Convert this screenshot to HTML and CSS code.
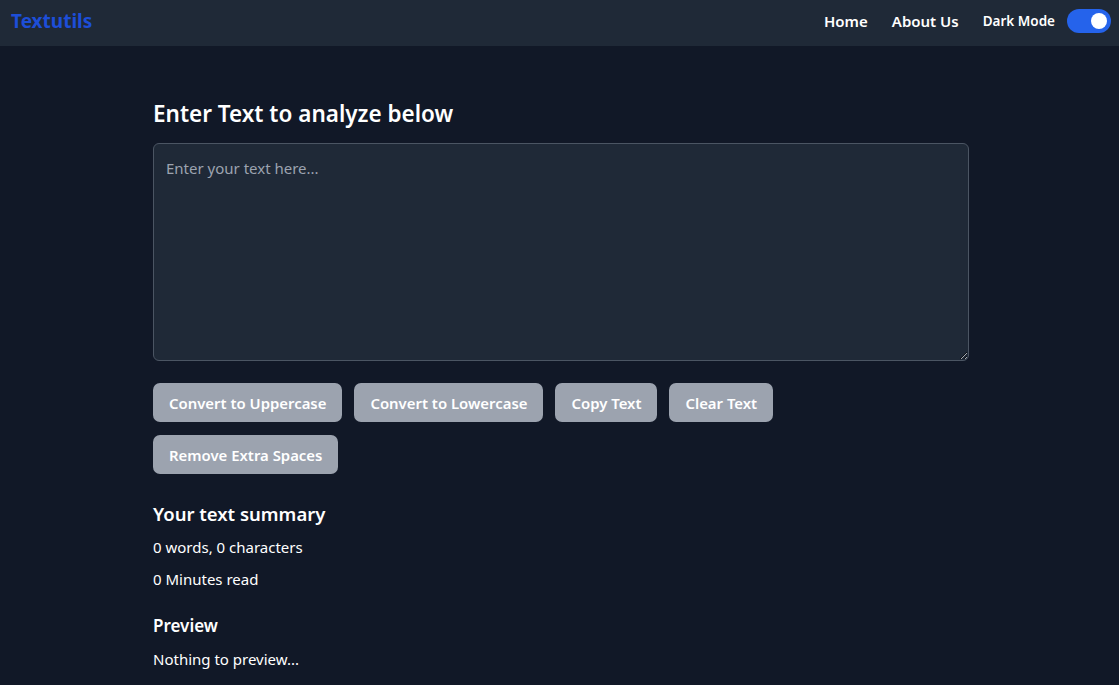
FILE: index.html
```html
<!DOCTYPE html>
<html lang="en">
<head>
<meta charset="utf-8">
<title>Textutils</title>
<link rel="stylesheet" href="styles.css">
</head>
<body>
<nav class="navbar">
  <a class="brand" href="#">Textutils</a>
  <div class="nav-right">
    <a class="nav-link" href="#">Home</a>
    <a class="nav-link" href="#">About Us</a>
    <span class="mode-label">Dark Mode</span>
    <span class="toggle"><span class="knob"></span></span>
  </div>
</nav>
<main class="container">
  <h1 class="title">Enter Text to analyze below</h1>
  <textarea class="text-input" placeholder="Enter your text here..."></textarea>
  <div class="buttons">
    <button class="btn">Convert to Uppercase</button>
    <button class="btn">Convert to Lowercase</button>
    <button class="btn">Copy Text</button>
    <button class="btn">Clear Text</button>
    <button class="btn">Remove Extra Spaces</button>
  </div>
  <h2 class="summary-title">Your text summary</h2>
  <p class="line">0 words, 0 characters</p>
  <p class="line">0 Minutes read</p>
  <h3 class="preview-title">Preview</h3>
  <p class="line">Nothing to preview...</p>
</main>
</body>
</html>
```
FILE: styles.css
```css
* { box-sizing: border-box; }
html, body { margin: 0; padding: 0; }
body {
  background: #111827;
  color: #ffffff;
  font-family: "Noto Sans", "Open Sans", sans-serif;
  height: 685px;
  overflow: hidden;
}
.navbar {
  height: 46px;
  background: #1f2937;
  display: flex;
  align-items: center;
  justify-content: space-between;
  padding: 0 8px 4px 11px;
}
.brand {
  color: #1d4ed8;
  font-weight: 700;
  font-size: 19px;
  text-decoration: none;
}
.nav-right {
  display: flex;
  align-items: center;
}
.nav-link {
  color: #ffffff;
  font-weight: 600;
  font-size: 15px;
  text-decoration: none;
  margin-right: 24px;
}
.mode-label {
  font-weight: 600;
  font-size: 13.5px;
  margin-right: 12px;
}
.toggle {
  width: 44px;
  height: 24px;
  border-radius: 12px;
  background: #2563eb;
  display: flex;
  align-items: center;
  justify-content: flex-end;
  padding: 0 4px;
}
.knob {
  width: 16px;
  height: 16px;
  border-radius: 50%;
  background: #ffffff;
}
.container {
  width: 816px;
  margin-left: 153px;
  padding-top: 52px;
}
.title {
  margin: 0 0 13px;
  font-size: 22.5px;
  font-weight: 600;
  line-height: 32px;
}
.text-input {
  display: block;
  width: 816px;
  height: 218px;
  background: #1f2937;
  border: 1px solid #4b5563;
  border-radius: 6px;
  color: #ffffff;
  font-family: inherit;
  font-size: 15px;
  padding: 14px 12px;
  resize: vertical;
  outline: none;
}
.text-input::placeholder { color: #9ca3af; }
.buttons {
  display: flex;
  flex-wrap: wrap;
  gap: 13px 12px;
  margin-top: 22px;
  width: 700px;
}
.btn {
  background: #9ca3af;
  color: #ffffff;
  border: none;
  border-radius: 7px;
  height: 39px;
  padding: 0 16px;
  font-family: inherit;
  font-size: 14.9px;
  font-weight: 600;
}
.summary-title {
  margin: 26px 0 7px;
  font-size: 18.5px;
  font-weight: 600;
  line-height: 28px;
}
.line {
  margin: 0 0 8px;
  font-size: 15px;
  line-height: 24px;
}
.preview-title {
  margin: 23px 0 9px;
  font-size: 17px;
  font-weight: 600;
  line-height: 24px;
}
```
